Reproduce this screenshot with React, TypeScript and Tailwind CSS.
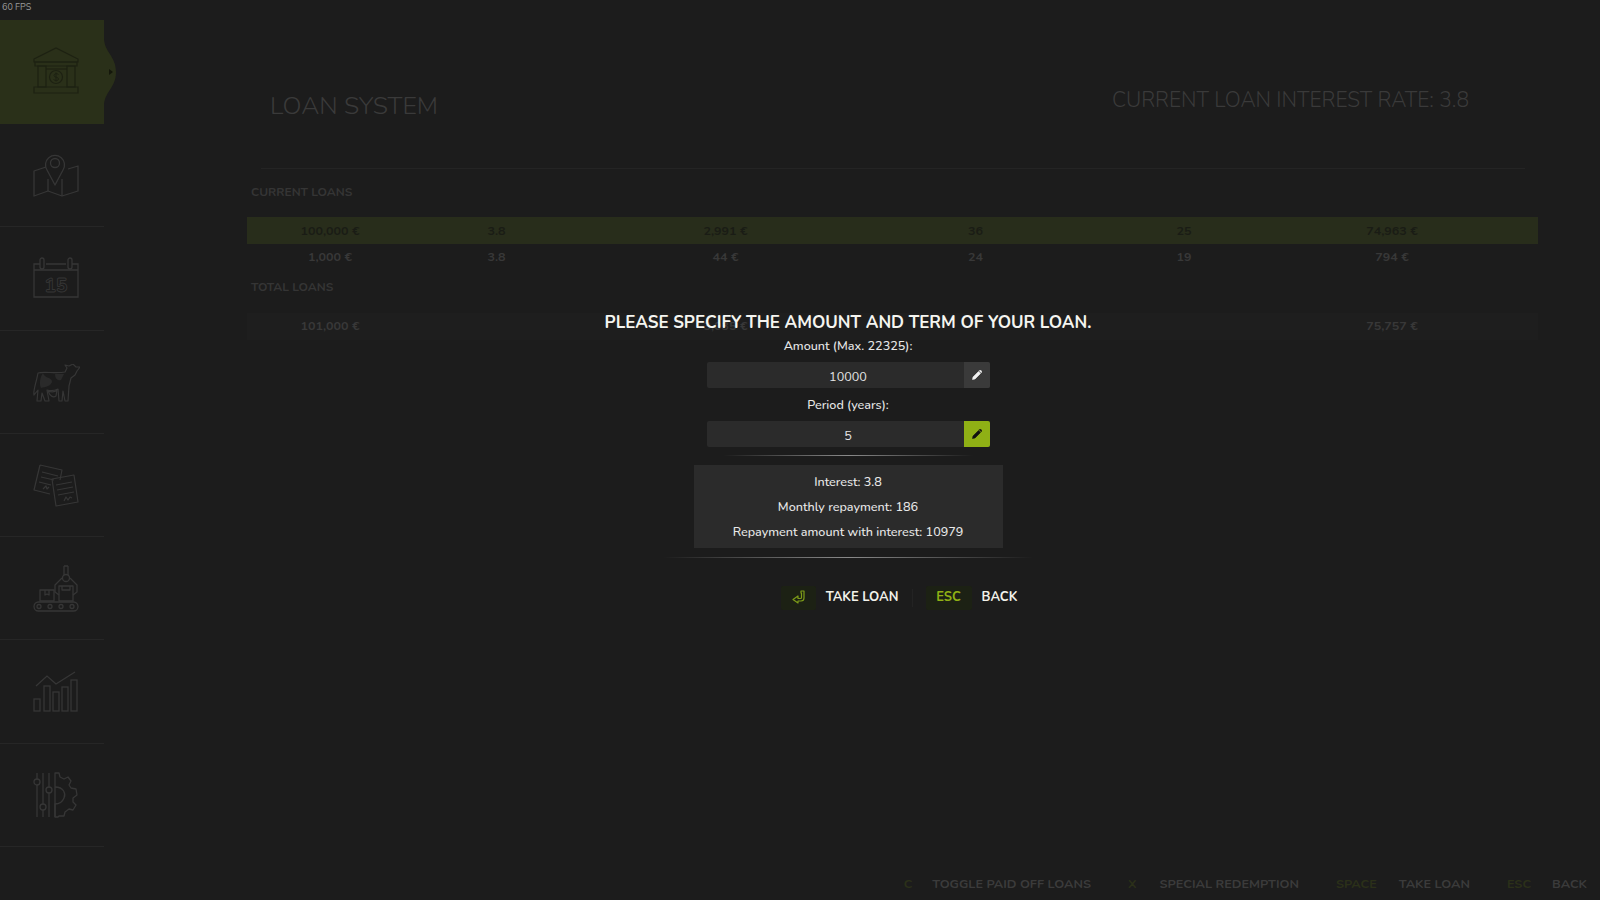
const font = "font-['Nunito','Lato','Noto_Sans',sans-serif]";

const cols = "grid grid-cols-[166px_167px_291px_209px_208px_208px] items-center text-center";

function BankIcon() {
  return (
    <svg width="50" height="50" viewBox="0 0 50 50" fill="none" stroke="#1d2112" strokeWidth="1.2">
      <path d="M3 12 L25 1 L47 12 L47 15 L3 15 Z" />
      <path d="M4 15 H46 V19 H4 Z" />
      <path d="M7 19 H15 V40 H7 Z M36 19 H44 V40 H36 Z" />
      <path d="M15 22 H36" />
      <circle cx="25" cy="30" r="6.5" />
      <path d="M27.5 27.5 C26 26 23 26.500 23 28.500 C23 31 27.500 29.500 27.500 32 C27.500 34 24 34 22.500 32.500 M25 25.500 V34.500" strokeWidth="1" />
      <path d="M3 40 H47 V46 H3 Z" />
    </svg>
  );
}

function MapIcon() {
  return (
    <svg width="46" height="46" viewBox="0 0 46 46" fill="none" stroke="#363636" strokeWidth="1.3" strokeLinejoin="round">
      <path d="M13 15 L1 19 V44 L15 39 L29 44 L45 39 V14 L35 17" />
      <path d="M15 27 V39 M29 27 V44" />
      <path d="M22 33 L14 18 A9.500 9.500 0 1 1 30 18 Z" />
      <circle cx="22" cy="11" r="4.500" />
    </svg>
  );
}

function CalendarIcon() {
  return (
    <svg width="46" height="46" viewBox="0 0 46 46" fill="none" stroke="#363636" strokeWidth="1.3">
      <path d="M7 7 H1 V40 H45 V7 H39 M13 7 H33 M1 13 H45" />
      <rect x="7" y="1" width="4" height="11" rx="2" />
      <rect x="35" y="1" width="4" height="11" rx="2" />
      <text x="23" y="35" textAnchor="middle" fontSize="19" fontWeight="800" strokeWidth="0.9">15</text>
    </svg>
  );
}

function CowIcon() {
  return (
    <svg width="48" height="38" viewBox="0 0 48 38" fill="none" stroke="#363636" strokeWidth="1.2" strokeLinejoin="round">
      <path d="M6 9 C12 7 24 10 33 8 L35 4 L33 1 L37 2 L41 0 L44 3 L48 3 L45 7 L43 11 L39 14 L37 22 L36 37 H33 L31 27 L30 37 H27 L26 25 C22 27 18 27 15 26 L17 37 H13 L10 29 L9 37 H5 L6 26 L2 31 C1 26 4 20 6 9 Z" />
      <path d="M11 9 C12 14 19 13 20 17 C20 22 13 23 9 24 C7 20 8 13 11 9 Z" fill="#2a2a2a" stroke="none" />
      <path d="M23 10 L32 10 L29 16 C26 17 23 15 23 10 Z" fill="#2a2a2a" stroke="none" />
      <path d="M16 27 C19 28 23 28 25 26 L24 32 C21 34 18 32 16 27 Z" />
    </svg>
  );
}

function PapersIcon() {
  return (
    <svg width="46" height="46" viewBox="0 0 46 46" fill="none" stroke="#363636" strokeWidth="1.2" strokeLinejoin="round">
      <path d="M7 1 L29 6 L27 16 M17 30 L1 26 L7 1" />
      <path d="M9 8 L25 12 M8 13 L21 16 M6 18 L18 21 M10 25 L13 22 L14 25 L16 23" />
      <path d="M19 15 L41 11 L45 38 L23 42 Z" />
      <path d="M23 21 L39 18 M24 26 L40 23 M25 31 L41 28 M31 37 L33 33 L35 36 L37 33 L39 34" />
    </svg>
  );
}

function FactoryIcon() {
  return (
    <svg width="46" height="48" viewBox="0 0 46 48" fill="none" stroke="#363636" strokeWidth="1.3" strokeLinejoin="round">
      <path d="M31 1 V10 M35 1 V10 M31 1 H35" />
      <circle cx="33" cy="13" r="3.500" />
      <path d="M29 13 L22 20 V27 L26 30 M37 13 L44 20 V27 L40 30" />
      <path d="M26 21 H40 V36 H26 Z M29 21 V25 H37 V21" />
      <path d="M7 25 H21 V36 H7 Z M12 25 V30 L14 29 L16 30 V25" />
      <rect x="1" y="37" width="44" height="9" rx="4.500" />
      <circle cx="6" cy="41.500" r="2" />
      <circle cx="17" cy="41.500" r="2" />
      <circle cx="28" cy="41.500" r="2" />
      <circle cx="39" cy="41.500" r="2" />
    </svg>
  );
}

function ChartIcon() {
  return (
    <svg width="46" height="42" viewBox="0 0 46 42" fill="none" stroke="#363636" strokeWidth="1.3">
      <path d="M3 15 L14 5 L23 13 L42 1" />
      <rect x="1" y="28" width="6" height="12" />
      <rect x="11" y="15" width="6" height="25" />
      <rect x="20" y="21" width="6" height="19" />
      <rect x="29" y="16" width="6" height="24" />
      <rect x="38" y="9" width="6" height="31" />
    </svg>
  );
}

function SlidersGearIcon() {
  return (
    <svg width="46" height="46" viewBox="0 0 46 46" fill="none" stroke="#363636" strokeWidth="1.3" strokeLinejoin="round">
      <path d="M4 1 V7 M4 13 V45 M10 1 V32 M10 38 V45 M16 1 V15 M16 21 V45" />
      <circle cx="4" cy="10" r="3" />
      <circle cx="10" cy="35" r="3" />
      <circle cx="16" cy="18" r="3" />
      <path d="M22 1 H26 L27 5 L31 7 L35 5 L38 9 L36 13 L38 16 L43 17 L44 23 L40 26 L40 30 L43 33 L40 38 L36 37 L32 40 L31 44 L26 44 L25 45 H22 Z" />
      <path d="M22 15 C31 15 33 22 31 26 C29 31 25 32 22 32 V45" />
    </svg>
  );
}

function EnterIcon() {
  return (
    <svg width="14" height="14" viewBox="0 0 14 14" fill="none" stroke="#7d9c18" strokeWidth="1.2" strokeLinejoin="round">
      <path d="M9 1 H12 V8 C12 10 11 11 9 11 H6 V13 L1 9.500 L6 6 V8.500 H8.500 C9.300 8.500 9.500 8 9.500 7.500 V3 H9 Z" />
    </svg>
  );
}

function PencilIcon({ color }: { color: string }) {
  return (
    <svg width="10" height="10" viewBox="0 0 10 10" fill={color} stroke={color} strokeWidth="0.6" strokeLinejoin="round">
      <path d="M0.500 9.500 L1 7 L6.500 1.500 L8.500 3.500 L3 9 Z M7.200 0.800 L8 0.300 C8.300 0.100 8.600 0.100 8.900 0.400 L9.600 1.100 C9.900 1.400 9.900 1.700 9.700 2 L9.200 2.800 Z" />
    </svg>
  );
}

const menu = [
  { icon: <BankIcon />, active: true },
  { icon: <MapIcon /> },
  { icon: <div className="pt-[3px]"><CalendarIcon /></div> },
  { icon: <div className="pt-[2px]"><CowIcon /></div> },
  { icon: <div className="pt-[3px]"><PapersIcon /></div> },
  { icon: <div className="pt-[1px]"><FactoryIcon /></div> },
  { icon: <ChartIcon /> },
  { icon: <SlidersGearIcon /> },
];

const loans = [
  ["100,000 €", "3.8", "2,991 €", "36", "25", "74,963 €"],
  ["1,000 €", "3.8", "44 €", "24", "19", "794 €"],
];

function Sidebar() {
  return (
    <div className="w-[104px] shrink-0 pt-5">
      {menu.map((item, i) => (
        <div
          key={i}
          className={
            item.active
              ? "relative flex h-[104px] items-center justify-center pl-[8px] bg-[#2a3019]"
              : "flex h-[103.3px] items-center justify-center pl-[8px] border-b border-[#262626]"
          }
        >
          {item.icon}
          {item.active && (
            <svg className="absolute left-[104px] top-[18px]" width="13" height="68" viewBox="0 0 13 68">
              <path d="M0 0 C0 14 12 18 12 34 C12 50 0 54 0 68 Z" fill="#2a3019" />
              <path d="M5 31 L9 34 L5 37 Z" fill="#14170b" />
            </svg>
          )}
        </div>
      ))}
    </div>
  );
}

function Background() {
  return (
    <div className="flex-1 pl-[143px] pr-[62px]">
      <div className="flex h-[169px] border-b border-[#242424] ml-[14px] mr-[13px]">
        <div className="pl-[9px] pt-[89px] text-[25px] leading-[34px] font-light text-[#3a3a3a]">LOAN SYSTEM</div>
        <div className="ml-auto mr-[56px] pt-[85px] text-[21px] leading-[30px] font-light text-[#3a3a3a]">
          CURRENT LOAN INTEREST RATE: 3.8
        </div>
      </div>
      <div className="pl-1 pt-[14px] text-[12px] leading-[18px] font-bold text-[#353535]">CURRENT LOANS</div>
      <div className="mt-[16px] text-[12.500px] font-bold">
        <div className={`${cols} h-[27px] pt-[2px] bg-[#282d1b] text-[#1a1c15]`}>
          {loans[0].map((v, i) => (
            <div key={i}>{v}</div>
          ))}
        </div>
        <div className={`${cols} h-[27px] text-[#383838]`}>
          {loans[1].map((v, i) => (
            <div key={i}>{v}</div>
          ))}
        </div>
      </div>
      <div className="pl-1 pt-[7px] text-[12px] leading-[18px] font-bold text-[#353535]">TOTAL LOANS</div>
      <div className={`${cols} mt-[17px] h-[27px] pb-[1px] bg-[#1e1e1e] text-[12.500px] font-bold text-[#383838]`}>
        <div>101,000 €</div>
        <div></div>
        <div>3,035 €</div>
        <div></div>
        <div></div>
        <div>75,757 €</div>
      </div>
    </div>
  );
}

function BottomBar() {
  return (
    <div className="absolute bottom-[7px] right-[13px] flex items-center text-[12.700px] leading-[18px] font-bold text-[#3b3b3b]">
      <span className="text-[#2b3019]">C</span>
      <span className="ml-[20px]">TOGGLE PAID OFF LOANS</span>
      <span className="ml-[37px] text-[#2b3019]">X</span>
      <span className="ml-[23px]">SPECIAL REDEMPTION</span>
      <span className="ml-[37px] text-[#2b3019]">SPACE</span>
      <span className="ml-[22px]">TAKE LOAN</span>
      <span className="ml-[37px] text-[#2b3019]">ESC</span>
      <span className="ml-[21px]">BACK</span>
    </div>
  );
}

function InputRow({ value, active }: { value: string; active?: boolean }) {
  return (
    <div className="flex h-[26px] w-[283px] rounded-[2px] bg-[#2b2b2b]">
      <div className="flex-1 pl-[26px] pt-[3px] text-center text-[12.600px] leading-[24px] text-[#e6e6e6]">{value}</div>
      <div
        className={
          active
            ? "flex w-[26px] items-center justify-center rounded-r-[2px] bg-[#8fb015]"
            : "flex w-[26px] items-center justify-center rounded-r-[2px] bg-[#3a3a3a]"
        }
      >
        <PencilIcon color={active ? "#111" : "#f2f2f2"} />
      </div>
    </div>
  );
}

function Fade() {
  return <div className="h-[1px] w-full bg-gradient-to-r from-transparent via-[#8a8a8a] to-transparent" />;
}

function LoanDialog() {
  return (
    <div className="absolute inset-0 flex flex-col items-center pl-[96px] pt-[311px] text-[12.600px] text-[#e8e8e8]">
      <div className="text-[17px] leading-[24px] font-bold text-[#f5f5f0]">PLEASE SPECIFY THE AMOUNT AND TERM OF YOUR LOAN.</div>
      <div className="-mt-[1px] leading-[24px] font-medium">Amount (Max. 22325):</div>
      <div className="mt-[4px]">
        <InputRow value="10000" />
      </div>
      <div className="mt-[5px] leading-[24px] font-medium">Period (years):</div>
      <div className="mt-[4px]">
        <InputRow value="5" active />
      </div>
      <div className="mt-[8px] w-[250px]">
        <Fade />
      </div>
      <div className="mt-[9px] flex h-[83px] w-[309px] flex-col items-center justify-center gap-[1px] bg-[#2b2b2b] pt-[1px] font-medium">
        <div className="leading-[24px]">Interest: 3.8</div>
        <div className="leading-[24px]">Monthly repayment: 186</div>
        <div className="leading-[24px]">Repayment amount with interest: 10979</div>
      </div>
      <div className="mt-[9px] w-[370px]">
        <Fade />
      </div>
      <div className="mt-[28px] flex h-[24px] items-center pl-[102px] text-[13px] font-bold text-[#f2f2ea]">
        <div className="flex h-[24px] w-[35px] items-center justify-center rounded-[2px] bg-[#1c2114] pl-[2px] pb-[2px]">
          <EnterIcon />
        </div>
        <div className="ml-[10px]">TAKE LOAN</div>
        <div className="ml-[13px] h-[18px] w-[1px] bg-[#232323]" />
        <div className="ml-[13px] flex h-[24px] w-[46px] items-center justify-center rounded-[2px] bg-[#1c2114] text-[#8fb015]">
          ESC
        </div>
        <div className="ml-[10px]">BACK</div>
      </div>
    </div>
  );
}

export default function App() {
  return (
    <div className={`relative flex h-[900px] w-[1600px] overflow-hidden bg-[#1c1c1c] ${font}`}>
      <div className="absolute left-[2px] top-0 text-[9px] leading-[14px] text-[#9a9a9a]">60 FPS</div>
      <Sidebar />
      <Background />
      <BottomBar />
      <LoanDialog />
    </div>
  );
}
